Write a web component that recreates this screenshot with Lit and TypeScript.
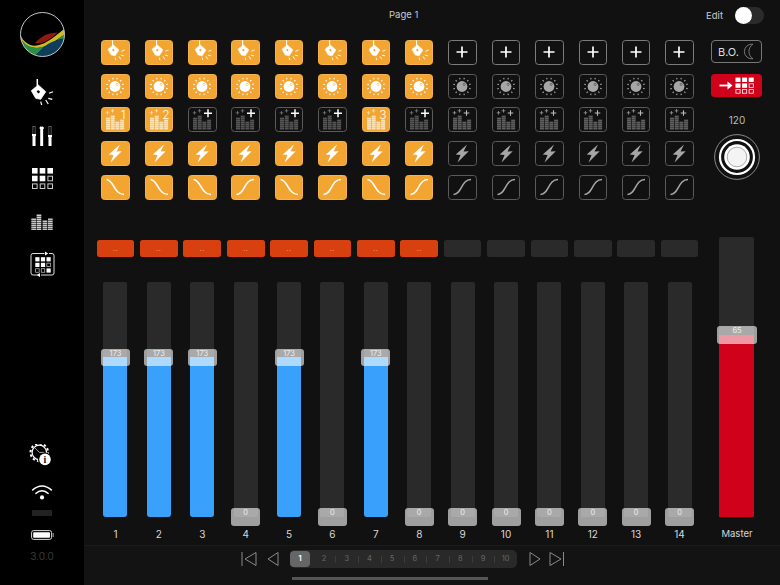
import { LitElement, html, css, svg } from "lit";
import { customElement } from "lit/decorators.js";

const range = (n: number) => Array.from({ length: n }, (_, i) => i);

const spotShape = (hole: string) => svg`
  <path d="M7.3 0v7" stroke="currentColor" stroke-width="1.5" fill="none"/>
  <path d="M1.3 11.7 L8.3 6 L15.7 12.7 L10.7 20.3 L5.7 19.3 Z" fill="currentColor" stroke="currentColor" stroke-width=".8" stroke-linejoin="round"/>
  <rect x="7.1" y="11.6" width="2.6" height="2.2" transform="rotate(40 8.3 12.7)" fill="${hole}"/>
  <path d="M19 14.3l4-1.6M18.3 19.3l4 1M15.7 21l2.6 4M10.7 22.7l1 3.3" stroke="currentColor" stroke-width="1.2" fill="none"/>
`;

const sunShape = (hole: string) => svg`
  <circle cx="14" cy="12.5" r="5.4" fill="currentColor"/>
  <circle cx="16.2" cy="10.4" r="1.1" fill="none" stroke="${hole}" stroke-width=".5"/>
  ${range(12).map((i) => {
    const a = (i * Math.PI) / 6 + 0.26;
    return svg`<line x1="${14 + Math.cos(a) * 7.4}" y1="${12.5 + Math.sin(a) * 7.4}" x2="${14 + Math.cos(a) * 9}" y2="${12.5 + Math.sin(a) * 9}" stroke="currentColor" stroke-width="1.1"/>`;
  })}
`;

const stripes = (x: number, w: number, top: number, bottom: number, color: string, step = 2, h = 1.6) => {
  const out = [];
  for (let y = bottom - h; y >= top; y -= step) {
    out.push(svg`<rect x="${x}" y="${y}" width="${w}" height="${h}" fill="${color}"/>`);
  }
  return out;
};

const spark = (x: number, y: number, r: number, c: string, w = 0.8) =>
  svg`<path d="M${x - r} ${y}h${2 * r}M${x} ${y - r}v${2 * r}" stroke="${c}" stroke-width="${w}" fill="none"/>`;

const eqShape = (bar: string, sp: string, extra: unknown) => svg`
  ${stripes(5, 4, 9.5, 22.5, bar, 2, 1.85)}
  ${stripes(9.7, 4, 7, 22.5, bar, 2, 1.85)}
  ${stripes(14.4, 4, 14.5, 22.5, bar, 2, 1.85)}
  ${stripes(19.1, 4, 12.5, 22.5, bar, 2, 1.85)}
  ${spark(6.5, 5.8, 1.8, sp)}
  ${spark(11.5, 3.8, 1.8, sp)}
  ${extra}
`;

const boltShape = svg`<path transform="translate(14 12.5) scale(1.12) translate(-14 -12.7)" d="M18.5 4.6 L8.4 13.7 L12.7 14 L10 20.8 L20 10.8 L15.4 10.9 Z" fill="currentColor"/>`;
const curveDown = svg`<path d="M5.5 4.5 C12.5 4.5 13 19.5 23 19.5" fill="none" stroke="currentColor" stroke-width="1.5"/>`;
const curveUp = svg`<path d="M5.5 19.5 C14 19.5 13 4.5 23 4.5" fill="none" stroke="currentColor" stroke-width="1.5"/>`;

const ORANGE = "#f2a531";
const PALE = "#fbe3b8";

type Cell = { on: boolean; icon: unknown; plus?: boolean };

function row1(i: number): Cell {
  if (i < 8) return { on: true, icon: svg`<g transform="translate(6 .4) scale(.76)">${spotShape(ORANGE)}</g>` };
  return { on: false, plus: true, icon: svg`<path d="M14 6.5v11M8.5 12h11" stroke="#fff" stroke-width="1.7"/>` };
}
function row2(i: number): Cell {
  return { on: i < 8, icon: sunShape(i < 8 ? ORANGE : "#333") };
}
function row3(i: number): Cell {
  const num: Record<number, string> = { 0: "1", 1: "2", 6: "3" };
  if (num[i]) {
    return {
      on: true,
      icon: eqShape(PALE, PALE, svg`<text x="24.5" y="11.5" text-anchor="end" class="num">${num[i]}</text>`),
    };
  }
  if (i < 8) return { on: false, icon: eqShape("#555", "#777", spark(20, 6.3, 4, "#fff", 1.5)) };
  return { on: false, icon: eqShape("#5f5f5f", "#999", spark(18.5, 6, 2.8, "#bbb", 1.1)) };
}
function row4(i: number): Cell {
  return { on: i < 8, icon: boltShape };
}
function row5(i: number): Cell {
  const up = i >= 8 || i === 3 || i === 5 || i === 7;
  return { on: i < 8, icon: up ? curveUp : curveDown };
}

const VALUES = [173, 173, 173, 0, 173, 0, 173, 0, 0, 0, 0, 0, 0, 0];

const logo = html`<svg class="logo" viewBox="0 0 45 45">
  <defs><clipPath id="lc"><circle cx="22.5" cy="22.5" r="22"/></clipPath></defs>
  <g clip-path="url(#lc)">
    <path d="M15 30.5 C20 27 24 21.6 33 21 L38 20.5 L30 27 C24 31 18 32 15 30.5Z" fill="#8f1a12"/>
    <path d="M0 22.6 C4 31 10 34.5 17 33.5 C27 32 35 24 45 16.6 L45 22.5 C36 28 28 35 18 36 C9 36.5 3 32 0.6 27Z" fill="#cdbb2a"/>
    <path d="M0.6 26.5 C5 33 11 36.5 19 35.5 C30 34 38 27 45 22 L45 26.5 C36 28 29 30 24 35 L15 44 C9 42 3 36 0.6 26.5Z" fill="#2c8f46"/>
    <path d="M15 44 L23.5 35.5 C30 30 37 28 45 26.5 L45 45 L15 45Z" fill="#0f3d5c"/>
  </g>
  <circle cx="22.5" cy="22.5" r="22" fill="none" stroke="#c4c4c4" stroke-width="1"/>
</svg>`;

const navSpot = html`<svg class="side" viewBox="-1 0 26 26" style="color:#fff">${spotShape("#000")}</svg>`;

const navFaders = html`<svg class="side" viewBox="0 0 26 26">
  ${[3.6, 11.3, 19.6].map((x, i) => {
    const t = [13, 6, 14][i];
    return svg`
      <rect x="${x + 0.3}" y="4.3" width="2.2" height="19.4" fill="none" stroke="#888" stroke-width=".6"/>
      <rect x="${x}" y="${t}" width="2.8" height="${24 - t}" fill="#fff"/>
      <rect x="${x - 0.6}" y="${t - 1}" width="4" height="2" fill="#fff"/>`;
  })}
</svg>`;

const gridSquares = (x0: number, y0: number, s: number, p: number, sw: number, lastOn = false) =>
  range(9).map((i) => {
    const x = x0 + (i % 3) * p;
    const y = y0 + Math.floor(i / 3) * p;
    return i < 5 || (lastOn && i === 8)
      ? svg`<rect x="${x}" y="${y}" width="${s}" height="${s}" fill="#fff"/>`
      : svg`<rect x="${x + sw / 2}" y="${y + sw / 2}" width="${s - sw}" height="${s - sw}" fill="none" stroke="#ccc" stroke-width="${sw}"/>`;
  });

const navGrid = html`<svg class="side" viewBox="0 0 26 26">${gridSquares(3, 3, 5.6, 7.7, 1)}</svg>`;

const navEq = html`<svg class="side" viewBox="0 0 26 26">
  ${stripes(2.3, 4.7, 8.7, 22, "#c4c4c4", 2, 1.5)}
  ${stripes(7.6, 4.7, 4.7, 22, "#d0d0d0", 2, 1.5)}
  ${stripes(13.6, 4.7, 12, 22, "#c4c4c4", 2, 1.5)}
  ${stripes(19, 4.7, 9.3, 22, "#c4c4c4", 2, 1.5)}
</svg>`;

const navScene = html`<svg class="side" viewBox="0 0 26 26">
  <path d="M15.5 2.5H4a2 2 0 0 0-2 2V22a2 2 0 0 0 2 2H9.5M12 24H23a2 2 0 0 0 2-2V4.5a2 2 0 0 0-2-2H20" fill="none" stroke="#ddd" stroke-width="1"/>
  <path d="M16 .4l3.2 2.1-3.2 2.1zM11 21.9l-3.2 2.1 3.2 2.1z" fill="#fff"/>
  ${gridSquares(6.3, 6.2, 4.2, 5.6, 0.7, true)}
</svg>`;

const navGear = html`<svg class="side" viewBox="0 0 26 26">
  <circle cx="10.3" cy="8.4" r="7.2" fill="none" stroke="#fff" stroke-width="1.2"/>
  <circle cx="10.3" cy="8.4" r="8.8" fill="none" stroke="#fff" stroke-width="2" stroke-dasharray="2.3 2.3"/>
  <path d="M10.3 8.4L6 4M10.3 8.4h5" stroke="#ccc" stroke-width=".8"/>
  <circle cx="16" cy="15.4" r="7" fill="#000"/>
  <circle cx="16" cy="15.4" r="5.8" fill="#fff"/>
  <text x="16" y="19" text-anchor="middle" class="info">i</text>
</svg>`;

const wifi = html`<svg class="wifi" viewBox="0 0 22 18">
  <path d="M1.2 6.4 Q11 -2.4 20.8 6.4M4.4 9.8 Q11 3.6 17.6 9.8" fill="none" stroke="#fff" stroke-width="1.5"/>
  <circle cx="11" cy="13.4" r="2.1" fill="#fff"/>
</svg>`;

const battery = html`<svg class="battery" viewBox="0 0 23 10">
  <rect x=".6" y=".6" width="20" height="8.8" rx="2" fill="none" stroke="#ddd" stroke-width="1"/>
  <rect x="2.2" y="2.2" width="16.8" height="5.6" rx=".8" fill="#fff"/>
  <rect x="21.6" y="3" width="1.2" height="4" fill="#888"/>
</svg>`;

const tri = (d: string) => html`<svg class="tr" viewBox="0 0 16 16"><path d="${d}" fill="none" stroke="#8a8a8a" stroke-width="1"/></svg>`;

@customElement("app-root")
export class AppRoot extends LitElement {
  static styles = css`
    :host { display: block; width: 780px; height: 585px; overflow: hidden; font-family: "Inter", "Liberation Sans", sans-serif; }
    .app { display: flex; width: 780px; height: 585px; background: #111; color: #ddd; }
    .sidebar { width: 84px; flex: none; background: #000; display: flex; flex-direction: column; align-items: center; padding-top: 12px; box-sizing: border-box; }
    .logo { width: 45px; height: 45px; display: block; margin-bottom: 22px; }
    .side { width: 26px; height: 26px; display: block; margin-bottom: 17px; flex: none; }
    .lower { margin-top: auto; display: flex; flex-direction: column; align-items: center; padding-bottom: 23px; }
    .lower .side { width: 26px; height: 26px; margin-bottom: 14px; }
    .wifi { width: 22px; height: 18px; display: block; }
    .gray { width: 20px; height: 6px; background: #222; margin: 8px 0 14px; }
    .battery { width: 23px; height: 10px; display: block; }
    .version { font-size: 10px; line-height: 12px; color: #3a3a3a; margin-top: 10px; }

    .main { flex: 1; display: flex; flex-direction: column; min-width: 0; }
    .header { height: 30px; flex: none; display: flex; align-items: center; position: relative; font-size: 9.5px; color: #ccc; }
    .title { position: absolute; left: 305px; top: 9px; line-height: 12px; }
    .edit { margin-left: auto; display: flex; align-items: center; gap: 12px; padding-right: 16px; }
    .toggle { width: 29px; height: 17px; border-radius: 9px; background: #2b2b2b; display: flex; }
    .toggle i { width: 17px; height: 17px; border-radius: 50%; background: #fff; display: block; }

    .body { flex: 1; display: flex; padding-left: 9.8px; min-height: 0; }
    .left { width: 607.6px; flex: none; display: flex; flex-direction: column; }
    .matrix { display: grid; grid-template-columns: repeat(14, 43.4px); grid-auto-rows: 25px; row-gap: 8.7px; padding-top: 10px; justify-items: center; }
    .btn { width: 28.5px; height: 25px; box-sizing: border-box; border-radius: 3.5px; border: 1px solid #5b5b5b; color: #a6a6a6; display: block; }
    .btn.on { background: #f2a531; border-color: #f6b44e; color: #fff; }
    .btn.plus { border-color: #7c7c7c; }
    .btn svg { width: 28.5px; height: 25px; margin: -1px; display: block; overflow: visible; }
    .num { font-size: 12px; font-weight: 300; fill: #fff; }
    .info { font-size: 10px; font-weight: 700; fill: #111; font-family: "Liberation Serif", serif; }

    .reds { display: grid; grid-template-columns: repeat(14, 43.4px); justify-items: center; margin-top: 40px; }
    .red { width: 37.7px; height: 17px; border-radius: 2.5px; background: #2a2a2a; text-align: center; font-size: 7px; line-height: 18px; letter-spacing: .5px; color: transparent; }
    .red.on { background: #d8410f; color: #f6a27a; }

    .faders { display: grid; grid-template-columns: repeat(14, 43.4px); justify-items: center; margin-top: 25px; height: 235px; }
    .track { width: 24px; height: 235px; background: #2a2a2a; border-radius: 2px; position: relative; }
    .fill { position: absolute; left: 0; right: 0; bottom: 0; background: #39a0fb; border-radius: 0 0 3px 3px; }
    .thumb { position: absolute; left: 50%; width: 29px; height: 17.5px; margin-left: -14.5px; margin-top: -8.75px; box-sizing: border-box; border-radius: 3px; background: rgba(255, 255, 255, 0.6); color: #eee; font-size: 7.5px; line-height: 10px; text-align: center; }
    .labels { display: grid; grid-template-columns: repeat(14, 43.4px); justify-items: center; margin-top: 8px; font-size: 10px; line-height: 18px; color: #d8d8d8; }

    .right { width: 71.2px; flex: none; display: flex; flex-direction: column; align-items: center; padding-top: 10px; }
    .bo { width: 51px; height: 23px; box-sizing: border-box; border: 1px solid #777; border-radius: 4px; display: flex; align-items: center; justify-content: center; gap: 3px; font-size: 11px; color: #ddd; flex: none; }
    .bo svg { width: 14px; height: 17px; display: block; }
    .go { width: 51px; height: 23px; margin-top: 11px; border-radius: 3.5px; background: #d0021b; display: block; flex: none; }
    .go svg { display: block; width: 51px; height: 23px; }
    .tempo { font-size: 10px; line-height: 14px; margin-top: 15.5px; color: #bbb; }
    .knob { width: 46px; height: 46px; display: block; margin-top: 7px; flex: none; }
    .mtrack { width: 35px; height: 280px; margin-top: 57px; flex: none; background: #2a2a2a; border-radius: 2px; position: relative; }
    .mfill { position: absolute; left: 0; right: 0; bottom: 0; background: #d0021b; }
    .mthumb { position: absolute; left: 50%; width: 40px; height: 18px; margin-left: -20px; margin-top: -9px; border-radius: 3px; background: rgba(255, 255, 255, 0.6); color: #eee; font-size: 7.5px; line-height: 10px; text-align: center; }
    .mlabel { margin-top: 8px; font-size: 9.5px; line-height: 18px; color: #d8d8d8; }

    .nav { height: 40px; flex: none; box-sizing: border-box; border-top: 1px solid #1b1b1b; background: #131313; padding-top: 4px; padding-left: 157px; }
    .navrow { display: flex; align-items: center; height: 18px; }
    .tr { width: 16px; height: 16px; display: block; flex: none; }
    .pages { width: 227px; height: 18px; margin: 0 11px 0 8px; background: #292929; border-radius: 5px; display: flex; align-items: center; font-size: 7.5px; color: #666; flex: none; }
    .pg { flex: 1; height: 16px; line-height: 16px; text-align: center; position: relative; }
    .pg + .pg:not(.after)::before { content: ""; position: absolute; left: 0; top: 5px; height: 7px; border-left: 1px solid #3c3c3c; }
    .pg.sel { flex: none; width: 20px; margin-right: 2.7px; background: #666; color: #fff; border-radius: 4px; font-weight: 600; }
    .home { width: 196px; height: 3px; background: #555; margin: 9px 0 0 51px; }
  `;

  render() {
    const rows = [row1, row2, row3, row4, row5];
    return html`<div class="app">
      <div class="sidebar">
        ${logo}${navSpot}${navFaders}${navGrid}${navEq}${navScene}
        <div class="lower">
          ${navGear}${wifi}
          <div class="gray"></div>
          ${battery}
          <div class="version">3.0.0</div>
        </div>
      </div>
      <div class="main">
        <div class="header">
          <span class="title">Page 1</span>
          <div class="edit"><span>Edit</span><div class="toggle"><i></i></div></div>
        </div>
        <div class="body">
          <div class="left">
            <div class="matrix">
              ${rows.map((r) =>
                range(14).map((i) => {
                  const c = r(i);
                  return html`<div class="btn ${c.on ? "on" : ""} ${c.plus ? "plus" : ""}"><svg viewBox="0 0 28.5 25">${c.icon}</svg></div>`;
                })
              )}
            </div>
            <div class="reds">
              ${range(14).map((i) => html`<div class="red ${i < 8 ? "on" : ""}">..</div>`)}
            </div>
            <div class="faders">
              ${VALUES.map((v) => {
                const pct = (v / 255) * 100;
                return html`<div class="track">
                  ${v > 0 ? html`<div class="fill" style="height:${pct}%"></div>` : ""}
                  <div class="thumb" style="top:${100 - pct}%">${v}</div>
                </div>`;
              })}
            </div>
            <div class="labels">${range(14).map((i) => html`<span>${i + 1}</span>`)}</div>
          </div>
          <div class="right">
            <div class="bo">
              <span>B.O.</span>
              <svg viewBox="0 0 14 17"><path d="M11 1.2 A7.4 7.4 0 1 0 11 15.8 A8.6 8.6 0 0 1 11 1.2Z" fill="none" stroke="#777" stroke-width="1"/></svg>
            </div>
            <div class="go">
              <svg viewBox="0 0 51 23">
                <path d="M8.5 11.5h11" stroke="#fff" stroke-width="1.8"/>
                <path d="M16.5 7.5l5 4-5 4z" fill="#fff"/>
                ${range(9).map((i) => {
                  const x = 24.5 + (i % 3) * 6.6;
                  const y = 3.6 + Math.floor(i / 3) * 5.8;
                  return i < 5
                    ? svg`<rect x="${x}" y="${y}" width="5" height="4.4" fill="#fff"/>`
                    : svg`<rect x="${x + 0.4}" y="${y + 0.4}" width="4.2" height="3.6" fill="none" stroke="#fff" stroke-width=".8"/>`;
                })}
              </svg>
            </div>
            <div class="tempo">120</div>
            <svg class="knob" viewBox="0 0 46 46">
              <circle cx="23" cy="23" r="22.4" fill="none" stroke="#999" stroke-width=".9"/>
              <circle cx="23" cy="23" r="17" fill="none" stroke="#fff" stroke-width="2.2"/>
              <circle cx="23" cy="23" r="12.8" fill="#fff"/>
              <circle cx="23" cy="23" r="9.8" fill="#f4f4f4" stroke="#999" stroke-width=".8"/>
            </svg>
            <div class="mtrack">
              <div class="mfill" style="height:65%"></div>
              <div class="mthumb" style="top:35%">65</div>
            </div>
            <div class="mlabel">Master</div>
          </div>
        </div>
        <div class="nav">
          <div class="navrow">
            ${tri("M1 1v14M15 1.5L4 8l11 6.5z")}
            <span style="width:9px"></span>
            ${tri("M12 1.5L2 8l10 6.5z")}
            <div class="pages">
              ${range(10).map((i) => html`<div class="pg ${i === 0 ? "sel" : ""} ${i === 1 ? "after" : ""}">${i + 1}</div>`)}
            </div>
            ${tri("M2 1.5L12 8 2 14.5z")}
            <span style="width:5px"></span>
            ${tri("M1 1.5L12 8 1 14.5zM14.5 1v14")}
          </div>
          <div class="home"></div>
        </div>
      </div>
    </div>`;
  }
}
